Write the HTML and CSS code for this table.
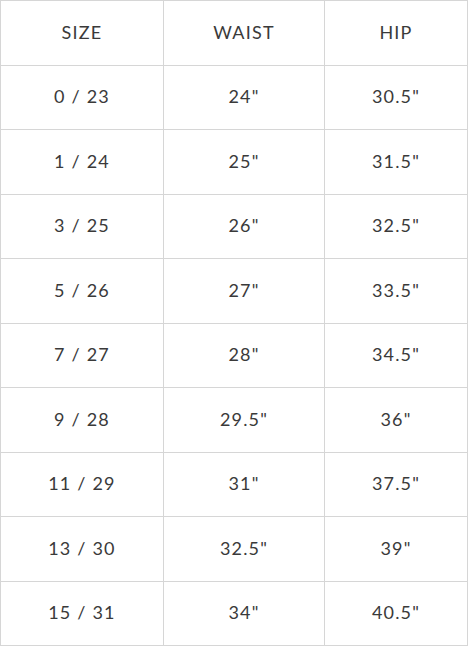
FILE: index.html
```html
<!DOCTYPE html>
<html>
<head>
<meta charset="utf-8">
<link rel="stylesheet" href="styles.css">
</head>
<body>
<table class="size-chart">
  <thead>
    <tr><th class="c1">SIZE</th><th class="c2">WAIST</th><th class="c3">HIP</th></tr>
  </thead>
  <tbody>
    <tr><td>0 / 23</td><td>24"</td><td>30.5"</td></tr>
    <tr><td>1 / 24</td><td>25"</td><td>31.5"</td></tr>
    <tr><td>3 / 25</td><td>26"</td><td>32.5"</td></tr>
    <tr><td>5 / 26</td><td>27"</td><td>33.5"</td></tr>
    <tr><td>7 / 27</td><td>28"</td><td>34.5"</td></tr>
    <tr><td>9 / 28</td><td>29.5"</td><td>36"</td></tr>
    <tr><td>11 / 29</td><td>31"</td><td>37.5"</td></tr>
    <tr><td>13 / 30</td><td>32.5"</td><td>39"</td></tr>
    <tr><td>15 / 31</td><td>34"</td><td>40.5"</td></tr>
  </tbody>
</table>
</body>
</html>
```
FILE: styles.css
```css
html, body {
  margin: 0;
  padding: 0;
  background: #ffffff;
}
.size-chart {
  width: 468px;
  border-collapse: collapse;
  table-layout: fixed;
  font-family: Lato, "Open Sans", sans-serif;
  font-size: 18px;
  letter-spacing: 1.2px;
  color: #3a3a3a;
}
.size-chart th,
.size-chart td {
  height: 61.5px;
  padding: 0 0 2px 0;
  line-height: 20px;
  border: 1px solid #d6d6d6;
  text-align: center;
  vertical-align: middle;
  font-weight: 400;
}
.c1 { width: 162px; }
.c2 { width: 160px; }
.c3 { width: auto; }
```
